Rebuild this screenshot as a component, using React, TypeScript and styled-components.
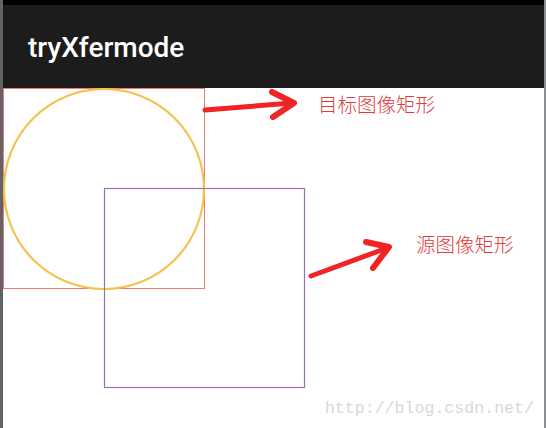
import React from "react";
import styled, { createGlobalStyle } from "styled-components";

const Global = createGlobalStyle`
  html, body { margin: 0; padding: 0; background: #ffffff; }
  body { width: 546px; height: 428px; overflow: hidden; }
`;

const Frame = styled.div`
  width: 546px;
  height: 428px;
  box-sizing: border-box;
  display: flex;
  flex-direction: column;
  border-left: 3px solid #5f6466;
  border-right: 2px solid #8a8e90;
  background: #ffffff;
`;

const StatusBar = styled.div`
  height: 5px;
  background: #000000;
  flex: none;
`;

const Toolbar = styled.div`
  height: 83px;
  flex: none;
  background: #1c1c1c;
  display: flex;
  align-items: center;
  padding-left: 25px;
  box-sizing: border-box;
`;

const Title = styled.h1`
  margin: 2px 0 0 0;
  font-family: Roboto, "Noto Sans", sans-serif;
  font-weight: 500;
  font-size: 28px;
  color: #ffffff;
  letter-spacing: 0;
`;

const Canvas = styled.div`
  position: relative;
  flex: 1;
  overflow: hidden;
`;

const Drawing = styled.svg`
  position: absolute;
  left: 0;
  top: 0;
`;

const Label = styled.div<{ $x: number; $y: number }>`
  position: absolute;
  left: ${(p) => p.$x}px;
  top: ${(p) => p.$y}px;
  font-family: "Noto Sans CJK SC", sans-serif;
  font-weight: 300;
  font-size: 19.5px;
  line-height: 1;
  color: #e03c3c;
  white-space: nowrap;
`;

const Watermark = styled.div`
  position: absolute;
  right: 10px;
  bottom: 10px;
  font-family: "Liberation Mono", "DejaVu Sans Mono", monospace;
  font-size: 16.6px;
  line-height: 1;
  color: #d8d8d8;
  white-space: nowrap;
`;

export default function App() {
  // canvas origin: page (3, 88)
  const ox = 3;
  const oy = 88;
  const p = (x: number, y: number) => `${x - ox},${y - oy}`;
  return (
    <>
      <Global />
      <Frame>
        <StatusBar />
        <Toolbar>
          <Title>tryXfermode</Title>
        </Toolbar>
        <Canvas>
          <Drawing width="541" height="340" viewBox="0 0 541 340">
            <rect x={0.5} y={0.5} width={201} height={200} fill="none" stroke="#f07878" strokeWidth={1} />
            <circle cx={101} cy={101} r={100} fill="none" stroke="#f5c24e" strokeWidth={2.2} />
            <rect x={101.5} y={100.5} width={200} height={199} fill="none" stroke="#9a72b4" strokeWidth={1.2} />
            <g stroke="#f02424" strokeLinecap="round" strokeLinejoin="round" fill="none">
              <polyline strokeWidth={5} points={`${p(205, 110)} ${p(292, 103)}`} />
              <polyline strokeWidth={6} points={`${p(272, 92)} ${p(294, 103)} ${p(273, 117)}`} />
              <polyline strokeWidth={5} points={`${p(311, 276)} ${p(387, 248)}`} />
              <polyline strokeWidth={6} points={`${p(366, 242)} ${p(389, 247)} ${p(373, 268)}`} />
            </g>
          </Drawing>
          <Label $x={315} $y={6}>目标图像矩形</Label>
          <Label $x={413} $y={146}>源图像矩形</Label>
          <Watermark>http://blog.csdn.net/</Watermark>
        </Canvas>
      </Frame>
    </>
  );
}
